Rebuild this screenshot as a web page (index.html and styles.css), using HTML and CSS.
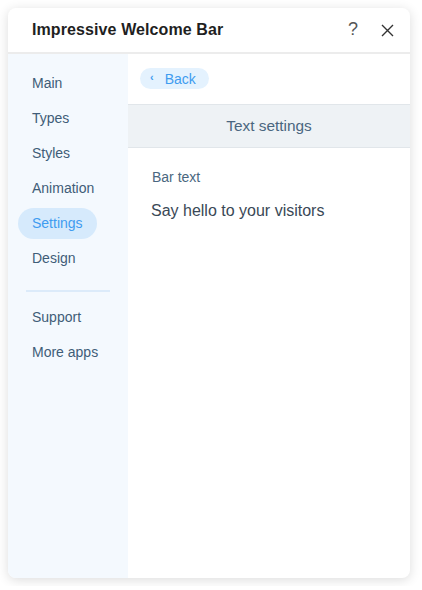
FILE: index.html
```html
<!DOCTYPE html>
<html>
<head>
<meta charset="utf-8">
<link rel="stylesheet" href="styles.css">
</head>
<body>
<div class="panel">
  <header class="header">
    <h1 class="title">Impressive Welcome Bar</h1>
    <div class="actions">
      <span class="help">?</span>
      <svg class="close" width="13" height="13" viewBox="0 0 13 13"><path d="M1 1 L12 12 M12 1 L1 12" stroke="#333" stroke-width="1.4" fill="none"/></svg>
    </div>
  </header>
  <div class="body">
    <nav class="sidebar">
      <div class="item">Main</div>
      <div class="item">Types</div>
      <div class="item">Styles</div>
      <div class="item">Animation</div>
      <div class="item active">Settings</div>
      <div class="item">Design</div>
      <div class="divider"></div>
      <div class="item">Support</div>
      <div class="item">More apps</div>
    </nav>
    <main class="content">
      <div class="back"><span class="chev">‹</span><span>Back</span></div>
      <div class="section">Text settings</div>
      <div class="label">Bar text</div>
      <div class="value">Say hello to your visitors</div>
    </main>
  </div>
</div>
</body>
</html>
```
FILE: styles.css
```css
html, body {
  margin: 0;
  padding: 0;
  background: #ffffff;
}
body {
  padding: 8px;
  font-family: "Liberation Sans", Arial, sans-serif;
}
.panel {
  width: 402px;
  height: 570px;
  background: #ffffff;
  border-radius: 8px;
  box-shadow: 0 2px 12px rgba(0, 0, 0, 0.14);
  display: flex;
  flex-direction: column;
  overflow: hidden;
}
.header {
  height: 44px;
  flex: none;
  display: flex;
  align-items: center;
  justify-content: space-between;
  padding: 0 16px 0 24px;
  border-bottom: 2px solid #ececec;
}
.title {
  margin: 0;
  font-size: 16px;
  font-weight: bold;
  color: #1f1f1f;
  letter-spacing: 0.1px;
}
.actions {
  display: flex;
  align-items: center;
  gap: 23px;
}
.help {
  font-size: 18px;
  color: #555;
  line-height: 18px;
  margin-top: -2px;
}
.close {
  display: block;
  margin-top: 1px;
}
.body {
  flex: 1;
  display: flex;
}
.sidebar {
  width: 120px;
  flex: none;
  background: #f4f9fe;
  padding: 14px 0 0 10px;
  box-sizing: border-box;
  display: flex;
  flex-direction: column;
  align-items: flex-start;
  gap: 4px;
}
.item {
  height: 31px;
  line-height: 31px;
  padding: 0 14px;
  font-size: 14px;
  color: #3f5d78;
  border-radius: 16px;
}
.item.active {
  background: #d6eafc;
  color: #3f9cf0;
}
.divider {
  width: 84px;
  height: 1.5px;
  background: #dcebfa;
  margin: 12px 0 6px 8px;
}
.content {
  flex: 1;
  display: flex;
  flex-direction: column;
  align-items: flex-start;
}
.back {
  margin: 14px 0 0 12px;
  height: 21px;
  border-radius: 11px;
  background: #e4f2fe;
  color: #3f9cf0;
  font-size: 14px;
  display: flex;
  align-items: center;
  padding: 0 13px 0 10px;
  gap: 11px;
}
.chev {
  font-size: 11px;
  font-weight: bold;
  line-height: 1;
  margin-top: -2px;
}
.section {
  align-self: stretch;
  margin-top: 15px;
  height: 42px;
  line-height: 42px;
  text-align: center;
  background: #eef2f5;
  border-top: 1px solid #e1e6ea;
  border-bottom: 1px solid #e1e6ea;
  font-size: 15.4px;
  color: #4a6680;
}
.label {
  margin: 20px 0 0 24px;
  font-size: 14px;
  line-height: 18px;
  color: #4a6780;
}
.value {
  margin: 15px 0 0 23px;
  font-size: 16px;
  line-height: 20px;
  color: #3a4856;
}
```
